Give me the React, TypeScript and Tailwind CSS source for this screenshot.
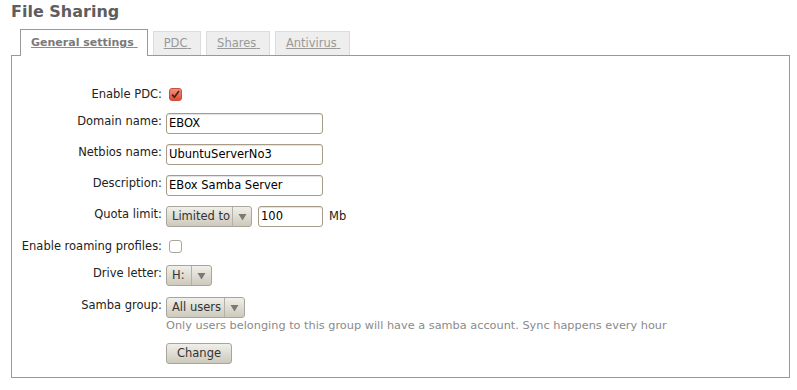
import React from 'react';

const FONT = "font-['DejaVu_Sans',Verdana,sans-serif]";

const Arrow: React.FC = () => (
  <svg width="9" height="8" viewBox="0 0 9 8" className="block">
    <polygon points="0.5,1 8.5,1 4.5,7.5" fill="#7a7a74" />
  </svg>
);

const Select: React.FC<{ value: string; width: string }> = ({ value, width }) => (
  <div
    className={`flex h-[21px] ${width} items-stretch rounded-[3px] border border-[#a9a59a] bg-gradient-to-b from-[#f0efe9] to-[#cdc9bd] text-[11.5px] text-[#333]`}
  >
    <span className="flex flex-1 items-center pl-[5px] pr-[2px] leading-none whitespace-nowrap">{value}</span>
    <span className="flex w-[20px] shrink-0 items-center justify-center border-l border-[#b5b1a6]">
      <Arrow />
    </span>
  </div>
);

const TextInput: React.FC<{ value: string; width: string }> = ({ value, width }) => (
  <div
    className={`flex h-[21px] ${width} items-center rounded-[3px] border border-[#a89c88] bg-white pl-[2px] text-[11.5px] text-black shadow-[inset_0_1px_1px_rgba(0,0,0,0.12)]`}
  >
    {value}
  </div>
);

const CheckedBox: React.FC = () => (
  <svg width="13" height="13" viewBox="0 0 13 13" className="block">
    <defs>
      <linearGradient id="cb" x1="0" y1="0" x2="0" y2="1">
        <stop offset="0" stopColor="#f6937e" />
        <stop offset="1" stopColor="#df4a33" />
      </linearGradient>
    </defs>
    <rect x="0.5" y="0.5" width="12" height="12" rx="2.5" fill="url(#cb)" stroke="#c9503c" />
    <path d="M3.2 6.6 L5.4 9.2 L10 3" fill="none" stroke="#3a2420" strokeWidth="1.7" />
  </svg>
);

const EmptyBox: React.FC = () => (
  <div className="h-[13px] w-[13px] rounded-[3px] border border-[#aaa69c] bg-white" />
);

const Row: React.FC<{ label: string; mt: string; lpt?: string; children: React.ReactNode }> = ({
  label,
  mt,
  lpt = 'pt-0',
  children,
}) => (
  <div className={`flex h-[21px] items-start ${mt}`}>
    <div className={`w-[149px] whitespace-nowrap text-right text-[11.5px] leading-[16px] text-[#222] ${lpt}`}>{label}</div>
    <div className="ml-[4px] flex h-[21px] items-center gap-[6px]">{children}</div>
  </div>
);

const tabs = [
  { name: 'General settings', active: true },
  { name: 'PDC', active: false },
  { name: 'Shares', active: false },
  { name: 'Antivirus', active: false },
];

export default function App() {
  return (
    <div className={`h-[390px] w-[797px] overflow-hidden bg-white ${FONT}`}>
      <h1 className="pl-[11px] pt-[1px] text-[16px] font-bold leading-[21px] text-[#5e5e5e]">File Sharing</h1>

      <div className="ml-[20px] mt-[7px] flex items-end gap-[5px]">
        {tabs.map((t) =>
          t.active ? (
            <div
              key={t.name}
              className="relative z-10 -mb-px flex h-[27px] items-center border border-b-0 border-[#999] bg-white pl-[10px] pr-[9px] pt-[1px] text-[11px] font-bold text-[#7a7a7a]"
            >
              <span className="underline decoration-[#8a8a8a]">{t.name}{'\u00a0'}</span>
            </div>
          ) : (
            <div
              key={t.name}
              className="flex h-[24px] items-center border border-b-0 border-[#dcdcdc] bg-[#eeeeee] pl-[10px] pr-[9px] pt-[1px] text-[11.5px] text-[#999]"
            >
              <span className="underline">{t.name}{'\u00a0'}</span>
            </div>
          )
        )}
      </div>

      <div className="ml-[11px] h-[323px] w-[779px] border border-[#999] pl-[1px] pt-[28px]">
        <Row label="Enable PDC:" mt="mt-0" lpt="pt-[2px]">
          <span className="ml-[3px]">
            <CheckedBox />
          </span>
        </Row>
        <Row label="Domain name:" mt="mt-[8px]">
          <TextInput value="EBOX" width="w-[157px]" />
        </Row>
        <Row label="Netbios name:" mt="mt-[10px]">
          <TextInput value="UbuntuServerNo3" width="w-[157px]" />
        </Row>
        <Row label="Description:" mt="mt-[10px]">
          <TextInput value="EBox Samba Server" width="w-[157px]" />
        </Row>
        <Row label="Quota limit:" mt="mt-[10px]">
          <div className="flex items-center gap-[6px]">
            <Select value="Limited to" width="w-[86px]" />
            <TextInput value="100" width="w-[65px]" />
          </div>
          <span className="text-[11.5px] text-[#222]">Mb</span>
        </Row>
        <Row label="Enable roaming profiles:" mt="mt-[9px]" lpt="pt-[2px]">
          <span className="ml-[3px]">
            <EmptyBox />
          </span>
        </Row>
        <Row label="Drive letter:" mt="mt-[8px]">
          <Select value="H:" width="w-[46px]" />
        </Row>
        <Row label="Samba group:" mt="mt-[11px]">
          <Select value="All users" width="w-[79px]" />
        </Row>
        <div className="ml-[153px] whitespace-nowrap text-[11.3px] leading-[16px] text-[#8a8a8a]">
          Only users belonging to this group will have a samba account. Sync happens every hour
        </div>
        <div className="ml-[153px] mt-[6px]">
          <button className="h-[21px] w-[66px] rounded-[3px] border border-[#a9a59a] bg-gradient-to-b from-[#f0efe9] to-[#cdc9bd] text-[11.5px] text-[#333]">
            Change
          </button>
        </div>
      </div>
    </div>
  );
}
